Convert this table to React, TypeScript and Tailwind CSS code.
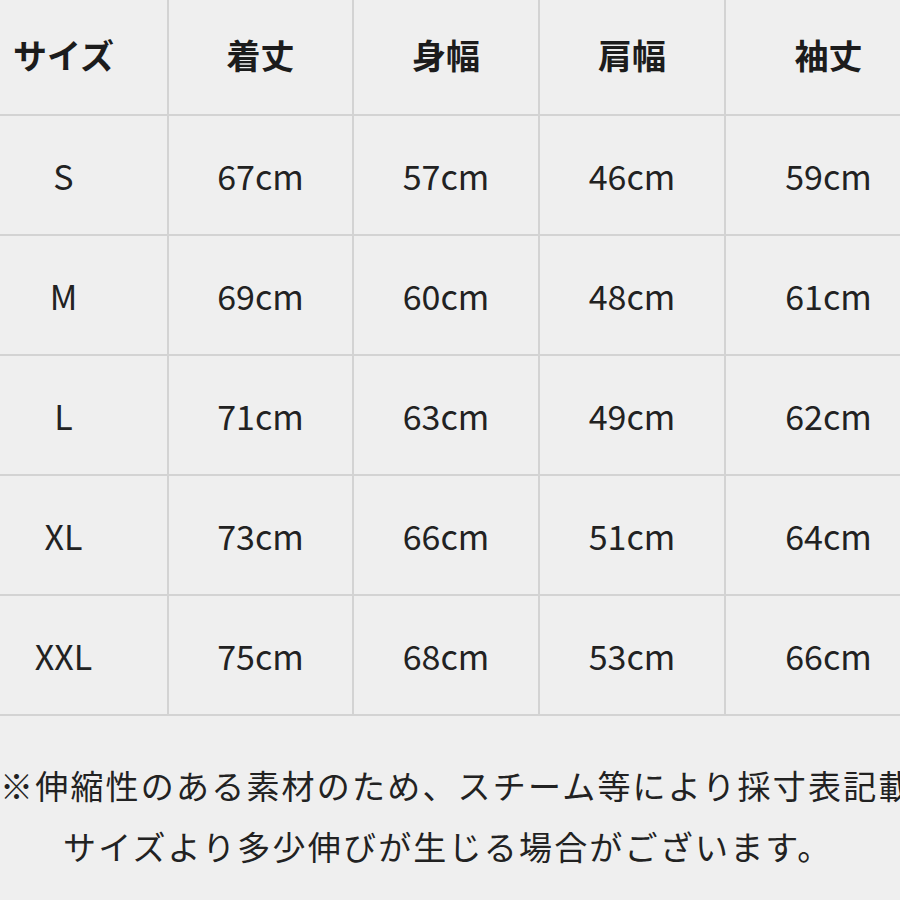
import React from 'react';

const headers = ['サイズ', '着丈', '身幅', '肩幅', '袖丈'];

const rows = [
  ['S', '67cm', '57cm', '46cm', '59cm'],
  ['M', '69cm', '60cm', '48cm', '61cm'],
  ['L', '71cm', '63cm', '49cm', '62cm'],
  ['XL', '73cm', '66cm', '51cm', '64cm'],
  ['XXL', '75cm', '68cm', '53cm', '66cm'],
];

const font = { fontFamily: '"Noto Sans CJK JP", "Noto Sans", sans-serif' };

const cellBase = 'flex items-center justify-center border-b-2 border-[#d3d3d3]';

const colClass = (i: number) => {
  if (i === 0) return 'border-r-2 pr-[40px]';
  if (i === 4) return '';
  return 'border-r-2';
};

export default function App() {
  return (
    <div className="w-[900px] h-[900px] overflow-hidden bg-[#efefef] text-[#222]" style={font}>
      <div className="w-[931px] grid grid-cols-[169px_185px_186px_186px_205px]">
        {headers.map((h, i) => (
          <div key={h} className={`${cellBase} ${colClass(i)} h-[116px] pb-[6px] text-[34px] font-bold text-[#1c1c1c]`}>
            {h}
          </div>
        ))}
        {rows.map((r) =>
          r.map((v, i) => (
            <div key={r[0] + i} className={`${cellBase} ${colClass(i)} h-[120px] pt-[1px] text-[34px]`}>
              {v}
            </div>
          ))
        )}
      </div>
      <div className="pt-[39px] text-[33px] leading-[61px] tracking-[2.2px] whitespace-nowrap">
        <div>※伸縮性のある素材のため、スチーム等により採寸表記載</div>
        <div className="pl-[63px]">サイズより多少伸びが生じる場合がございます。</div>
      </div>
    </div>
  );
}
